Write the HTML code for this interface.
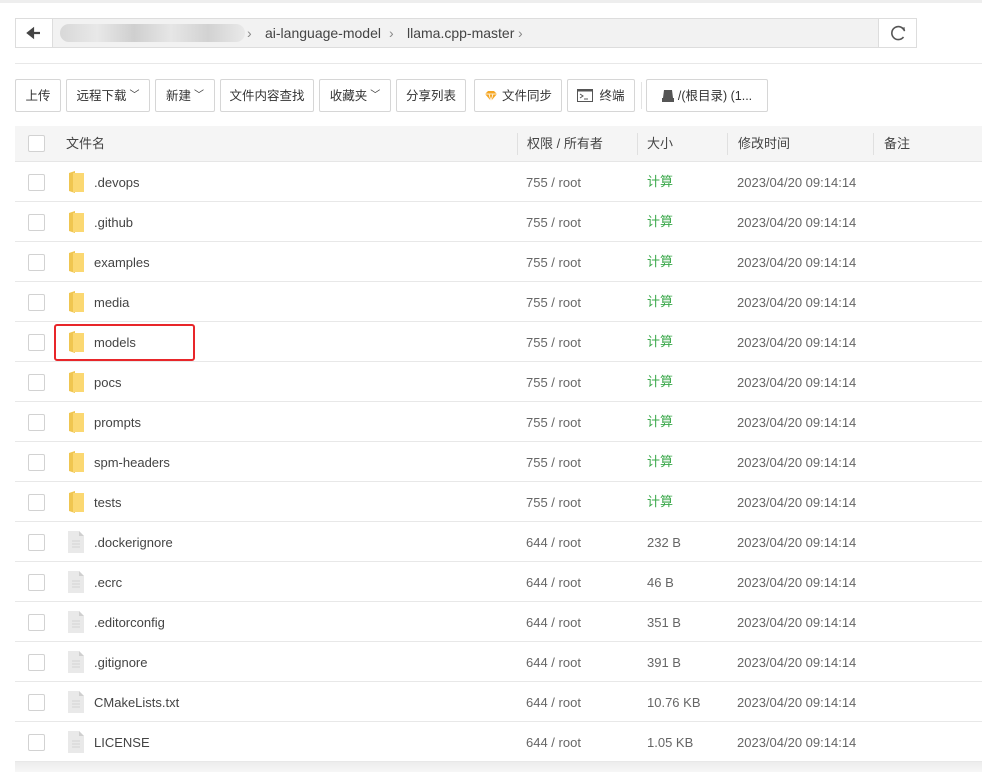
<!DOCTYPE html>
<html><head><meta charset="utf-8"><style>
*{margin:0;padding:0;box-sizing:border-box}
body{width:982px;height:772px;background:#fff;font-family:"Liberation Sans","Noto Sans CJK SC",sans-serif;font-size:13px;line-height:18px;color:#555;position:relative;overflow:hidden}
.abs{position:absolute}
.topbar{left:0;top:0;width:982px;height:3px;background:#eee}
.crumb{left:15px;top:18px;width:902px;height:30px;border:1px solid #ddd;background:#f2f2f2}
.back{left:15px;top:18px;width:38px;height:30px;border:1px solid #ddd;background:#fff}
.refresh{left:878px;top:18px;width:39px;height:30px;border:1px solid #ddd;background:#fff}
.blur{left:60px;top:24px;width:185px;height:18px;border-radius:9px;background:linear-gradient(90deg,#d8d8d8,#e8e8e8 20%,#cfcfcf 40%,#e6e6e6 60%,#d2d2d2 80%,#e9e9e9)}
.ctext{top:24px;font-size:14px;color:#444}
.sep{left:15px;top:63px;width:967px;height:1px;background:#e8e8e8}
.btn{top:79px;height:33px;border:1px solid #d6d6d6;border-radius:2px;background:#fff;font-size:12.5px;color:#333;display:flex;align-items:center;justify-content:center;line-height:16px}
.thead{left:15px;top:126px;width:967px;height:36px;background:#f5f5f5;border-bottom:1px solid #e6e6e6}
.th{top:135px;font-size:13px;color:#444}
.vd{top:133px;width:1px;height:22px;background:#e0e0e0}
.cb{width:17px;height:17px;border:1px solid #d2d2d2;border-radius:2px;background:#fff}
.row{left:15px;width:967px;height:40px;border-bottom:1px solid #e8e8e8}
.t{font-size:13px;color:#666}
</style></head><body>
<div class="abs topbar"></div>
<div class="abs crumb"></div>
<div class="abs back"><svg width="36" height="28"><path d="M12 14h12M12 14l5-4v8z" stroke="#444" stroke-width="2.2" fill="#444"/></svg></div>
<div class="abs blur"></div>
<div class="abs ctext" style="left:247px;color:#888">›</div>
<div class="abs ctext" style="left:265px">ai-language-model</div>
<div class="abs ctext" style="left:389px;color:#888">›</div>
<div class="abs ctext" style="left:407px">llama.cpp-master</div>
<div class="abs ctext" style="left:518px;color:#888">›</div>
<div class="abs refresh"><svg width="37" height="28"><path d="M25.5 12 A6.5 6.5 0 1 0 24.5 18" stroke="#555" stroke-width="1.6" fill="none"/><path d="M22.5 9.5l3.5 3-0.5-4.5z" fill="#555"/></svg></div>
<div class="abs sep"></div>

<div class="abs btn" style="left:15px;width:46px">上传</div>
<div class="abs btn" style="left:66px;width:84px">远程下载 <span style="font-size:10px;margin-left:3px">﹀</span></div>
<div class="abs btn" style="left:155px;width:60px">新建 <span style="font-size:10px;margin-left:3px">﹀</span></div>
<div class="abs btn" style="left:220px;width:94px">文件内容查找</div>
<div class="abs btn" style="left:319px;width:72px">收藏夹 <span style="font-size:10px;margin-left:3px">﹀</span></div>
<div class="abs btn" style="left:396px;width:70px">分享列表</div>
<div class="abs btn" style="left:474px;width:88px"><svg width="14" height="12" style="margin-right:4px"><path d="M1 4l3-3h6l3 3-6 7z" fill="#f5a623"/><path d="M1 4h12M5 4l2 7 2-7" stroke="#fff" stroke-width=".8" fill="none"/></svg>文件同步</div>
<div class="abs btn" style="left:567px;width:68px"><svg width="16" height="13" style="margin-right:6px"><rect x=".5" y=".5" width="15" height="12" fill="#fff" stroke="#555"/><rect x=".5" y=".5" width="15" height="2" fill="#555"/><path d="M3 5l3 2-3 2M7 10h4" stroke="#555" fill="none"/></svg>终端</div>
<div class="abs" style="left:641px;top:82px;width:1px;height:27px;background:#e3e3e3"></div>
<div class="abs btn" style="left:646px;width:122px"><svg width="12" height="13" style="margin-right:4px"><path d="M2 1h8l1 8H1z" fill="#555"/><rect x="0" y="9" width="12" height="4" fill="#555"/></svg>/(根目录) (1...</div>

<div class="abs thead"></div>
<div class="abs cb" style="left:28px;top:135px"></div>
<div class="abs th" style="left:66px">文件名</div>
<div class="abs vd" style="left:517px"></div><div class="abs th" style="left:527px">权限 / 所有者</div>
<div class="abs vd" style="left:637px"></div><div class="abs th" style="left:647px">大小</div>
<div class="abs vd" style="left:727px"></div><div class="abs th" style="left:738px">修改时间</div>
<div class="abs vd" style="left:873px"></div><div class="abs th" style="left:884px">备注</div>

<div id="rows"></div>
<script>
var d=[[".devops",1],[".github",1],["examples",1],["media",1],["models",1],["pocs",1],["prompts",1],["spm-headers",1],["tests",1],[".dockerignore",0,"232 B"],[".ecrc",0,"46 B"],[".editorconfig",0,"351 B"],[".gitignore",0,"391 B"],["CMakeLists.txt",0,"10.76 KB"],["LICENSE",0,"1.05 KB"]];
var h="";
d.forEach(function(r,i){var y=162+i*40,c=y+20;
h+='<div class="abs row" style="top:'+y+'px"></div>';
h+='<div class="abs cb" style="left:28px;top:'+(c-8)+'px"></div>';
if(r[1])h+='<svg class="abs" style="left:67px;top:'+(c-12)+'px" width="18" height="24"><path d="M2 3l6-2v22l-6-2z" fill="#f0c650"/><path d="M6 3h11v19H6z" fill="#fbd872"/></svg>';
else h+='<svg class="abs" style="left:68px;top:'+(c-11)+'px" width="16" height="22"><path d="M0 0h11l5 5v17H0z" fill="#e9e9e9"/><path d="M11 0v5h5z" fill="#cfcfcf"/><path d="M4 10h8M4 13h8M4 16h8" stroke="#d2d2d2"/></svg>';
h+='<div class="abs t" style="left:94px;top:'+(c-8)+'px;color:#444">'+r[0]+'</div>';
h+='<div class="abs t" style="left:526px;top:'+(c-8)+'px">'+(r[1]?"755":"644")+' / root</div>';
h+='<div class="abs t" style="left:647px;top:'+(c-(r[1]?9:8))+'px;'+(r[1]?'color:#3aa84a':'')+'">'+(r[1]?"计算":r[2])+'</div>';
h+='<div class="abs t" style="left:737px;top:'+(c-8)+'px">2023/04/20 09:14:14</div>';
});
h+='<div class="abs" style="left:54px;top:324px;width:141px;height:37px;border:2px solid #e8262a;border-radius:3px"></div>';
h+='<div class="abs" style="left:15px;top:762px;width:967px;height:10px;background:linear-gradient(#ececec,#f6f6f6)"></div>';
document.getElementById("rows").innerHTML=h;
</script>
</body></html>
